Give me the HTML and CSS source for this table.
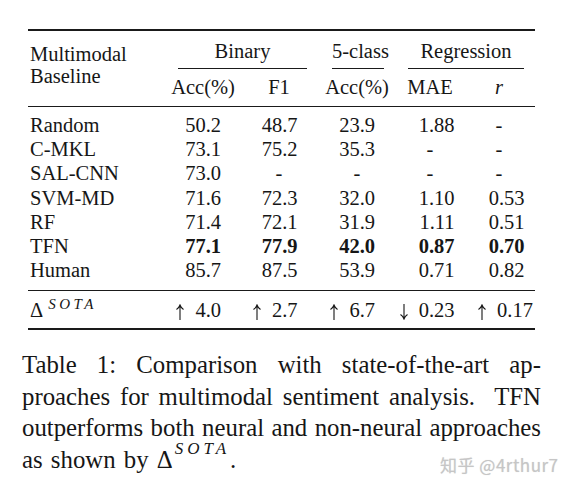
FILE: index.html
```html
<!DOCTYPE html>
<html lang="en">
<head>
    <title>Table 1</title>
    <link rel="stylesheet" href="styles.css">
</head>
<body>
    <div class="page">
        <div class="results">
            <div class="rule heavy"></div>

            <!-- header -->
            <div class="name">Multimodal<br>Baseline</div>
            <div class="group binary">Binary</div>
            <div class="group five">5-class</div>
            <div class="group regression">Regression</div>
            <div class="sub c-acc">Acc(%)</div>
            <div class="sub c-f1">F1</div>
            <div class="sub c-5">Acc(%)</div>
            <div class="sub c-mae">MAE</div>
            <div class="sub c-r"><i>r</i></div>

            <div class="rule mid"></div>

            <!-- rows -->
            <div class="label">Random</div>
            <div class="num c-acc">50.2</div>
            <div class="num c-f1">48.7</div>
            <div class="num c-5">23.9</div>
            <div class="num c-mae">1.88</div>
            <div class="dash c-r">-</div>

            <div class="label">C-MKL</div>
            <div class="num c-acc">73.1</div>
            <div class="num c-f1">75.2</div>
            <div class="num c-5">35.3</div>
            <div class="dash c-mae">-</div>
            <div class="dash c-r">-</div>

            <div class="label">SAL-CNN</div>
            <div class="num c-acc">73.0</div>
            <div class="dash c-f1">-</div>
            <div class="dash c-5">-</div>
            <div class="dash c-mae">-</div>
            <div class="dash c-r">-</div>

            <div class="label">SVM-MD</div>
            <div class="num c-acc">71.6</div>
            <div class="num c-f1">72.3</div>
            <div class="num c-5">32.0</div>
            <div class="num c-mae">1.10</div>
            <div class="num c-r">0.53</div>

            <div class="label">RF</div>
            <div class="num c-acc">71.4</div>
            <div class="num c-f1">72.1</div>
            <div class="num c-5">31.9</div>
            <div class="num c-mae">1.11</div>
            <div class="num c-r">0.51</div>

            <div class="label">TFN</div>
            <div class="num c-acc best">77.1</div>
            <div class="num c-f1 best">77.9</div>
            <div class="num c-5 best">42.0</div>
            <div class="num c-mae best">0.87</div>
            <div class="num c-r best">0.70</div>

            <div class="label">Human</div>
            <div class="num c-acc">85.7</div>
            <div class="num c-f1">87.5</div>
            <div class="num c-5">53.9</div>
            <div class="num c-mae">0.71</div>
            <div class="num c-r">0.82</div>

            <div class="rule sep"></div>

            <!-- improvement over state of the art -->
            <div class="label delta">&#916;<sup class="sota">SOTA</sup></div>
            <div class="num delta c-acc">
                <svg class="arrow" viewBox="0 0 10 16"><path d="M5 1.5V16M1.5 5.5Q4 3.8 5 1Q6 3.8 8.5 5.5"/></svg>4.0
            </div>
            <div class="num delta c-f1">
                <svg class="arrow" viewBox="0 0 10 16"><path d="M5 1.5V16M1.5 5.5Q4 3.8 5 1Q6 3.8 8.5 5.5"/></svg>2.7
            </div>
            <div class="num delta c-5">
                <svg class="arrow" viewBox="0 0 10 16"><path d="M5 1.5V16M1.5 5.5Q4 3.8 5 1Q6 3.8 8.5 5.5"/></svg>6.7
            </div>
            <div class="num delta c-mae">
                <svg class="arrow" viewBox="0 0 10 16"><path d="M5 0V14.5M1.5 10.5Q4 12.2 5 15Q6 12.2 8.5 10.5"/></svg>0.23
            </div>
            <div class="num delta c-r">
                <svg class="arrow" viewBox="0 0 10 16"><path d="M5 1.5V16M1.5 5.5Q4 3.8 5 1Q6 3.8 8.5 5.5"/></svg>0.17
            </div>

            <div class="rule heavy bottom"></div>
        </div>

        <p class="caption">
            <span class="line">Table 1: Comparison with state-of-the-art ap-</span>
            <span class="line">proaches for multimodal sentiment analysis.&nbsp; TFN</span>
            <span class="line">outperforms both neural and non-neural approaches</span>
            <span class="line last">as shown by &#916;<sup class="sota big">SOTA</sup>.</span>
        </p>

        <div class="watermark" lang="zh-CN">&#30693;&#20046; @4rthur7</div>
    </div>
</body>
</html>
```

FILE: styles.css
```css
body {
    margin: 0;
    background-color: white;
}
.page {
    position: relative;
    width: 572px;
    height: 490px;
    overflow: hidden;
    color: #161616;
    font-family: "Liberation Serif", serif;
}
.results {
    display: grid;
    grid-template-columns: 137px 76px 76px 80px 80px 58px;
    width: 507px;
    margin: 29px 0 0 28px;
    font-size: 20.5px;
    line-height: 24.2px;
}
.rule {
    grid-column: 1 / -1;
    height: 1px;
    background-color: #1a1a1a;
}
.rule.heavy {
    height: 2px;
}
.rule.mid {
    margin: 1px 0 6px;
}
.rule.sep {
    margin: 7.6px 0 7px;
}
.rule.bottom {
    margin-top: 6px;
}
.name {
    grid-row: span 2;
    padding: 12px 0 0 2px;
    line-height: 22px;
}
.group {
    text-align: center;
    white-space: nowrap;
    line-height: 24px;
    padding: 8px 0 5px;
    border-bottom: 1px solid #1a1a1a;
}
.group.binary {
    grid-column: span 2;
    margin: 0 10px 0 13px;
}
.group.five {
    margin: 0 13px 0 15px;
}
.group.regression {
    grid-column: span 2;
    margin: 0 11px;
}
.sub {
    text-align: center;
    white-space: nowrap;
    line-height: 24px;
    padding: 6px 0;
}
.label {
    padding-left: 2px;
    white-space: nowrap;
}
.dash {
    text-align: center;
}
.num {
    text-align: right;
    white-space: nowrap;
}
.num.c-acc { padding-right: 20px; }
.num.c-f1 { padding-right: 19.5px; }
.num.c-5 { padding-right: 22px; }
.num.c-mae { padding-right: 22.5px; }
.num.c-r { padding-right: 10.5px; }
.sub.c-mae,
.sub.c-r,
.dash.c-mae,
.dash.c-r {
    padding-right: 14px;
}
.best {
    font-weight: bold;
}
.delta {
    line-height: 24px;
}
.arrow {
    width: 10px;
    height: 16px;
    margin-right: 10px;
    vertical-align: -3px;
    fill: none;
    stroke: currentColor;
    stroke-width: 1.1;
}
.sota {
    font-size: 15px;
    font-style: italic;
    letter-spacing: 3.5px;
    line-height: 0;
    vertical-align: 8px;
    margin-left: 5px;
}
.caption {
    margin: 19px 0 0 22px;
    width: 519px;
    font-size: 24.8px;
    line-height: 31.5px;
}
.line {
    display: block;
    text-align: justify;
    text-align-last: justify;
}
.line.last {
    text-align-last: left;
    word-spacing: 2px;
}
.sota.big {
    font-size: 17px;
    letter-spacing: 4px;
    vertical-align: 14px;
    margin-left: 2px;
}
.watermark {
    position: absolute;
    left: 440px;
    top: 452px;
    font-family: "Noto Sans CJK SC", sans-serif;
    font-size: 17px;
    letter-spacing: 0.5px;
    color: #c6c6c6;
    text-shadow: 0 0 1px rgba(0, 0, 0, 0.15);
}
```
